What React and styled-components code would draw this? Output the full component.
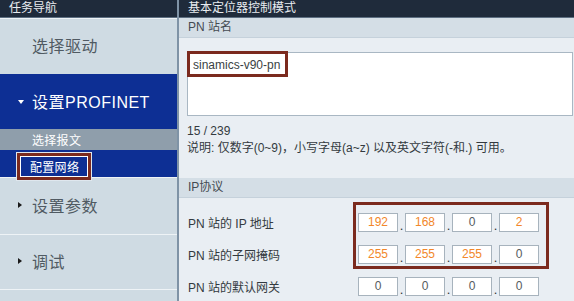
import styled, { createGlobalStyle } from "styled-components";

const GlobalStyle = createGlobalStyle`
  html, body { margin: 0; padding: 0; }
  body {
    font-family: "Liberation Sans", "Noto Sans CJK SC", sans-serif;
    background: #e9eef3;
  }
`;

const Screen = styled.div`
  width: 574px;
  height: 301px;
  overflow: hidden;
  display: grid;
  grid-template-columns: 179px 1fr;
  background: #e9eef3;
`;

const Sidebar = styled.div`
  display: flex;
  flex-direction: column;
  border-right: 2px solid #7f93a6;
  background: #cfdbe3;
`;

const Main = styled.div`
  display: flex;
  flex-direction: column;
  background: #e9eef3;
  min-width: 0;
`;

const PanelHeader = styled.div`
  height: 17px;
  flex-shrink: 0;
  border-bottom: 1px solid #5d6f82;
  background: #1f2b3b;
  color: #e8ecf0;
  font-size: 12px;
  line-height: 17px;
  padding-left: ${(p) => p.$pad || 9}px;
`;

const NavItem = styled.div`
  height: ${(p) => p.$h}px;
  flex-shrink: 0;
  box-sizing: border-box;
  display: flex;
  align-items: center;
  gap: 8px;
  padding-left: ${(p) => (p.$arrow ? 18 : 32)}px;
  padding-bottom: 3px;
  font-size: 16px;
  letter-spacing: 0.5px;
  color: ${(p) => (p.$active ? "#ffffff" : "#505a62")};
  background: ${(p) => (p.$active ? "#0d2f94" : "#cfdbe3")};
  border-top: 1px solid ${(p) => (p.$active ? "#0d2f94" : "#eef3f6")};
`;

const ArrowDown = styled.span`
  width: 0;
  height: 0;
  border-left: 3px solid transparent;
  border-right: 3px solid transparent;
  border-top: 4px solid #ffffff;
  margin-top: 2px;
`;

const ArrowRight = styled.span`
  width: 0;
  height: 0;
  border-top: 3px solid transparent;
  border-bottom: 3px solid transparent;
  border-left: 4px solid #1a1a1a;
  margin-right: 2px;
`;

const SubItem = styled.div`
  height: ${(p) => p.$h}px;
  flex-shrink: 0;
  display: flex;
  align-items: center;
  padding-left: ${(p) => p.$pad}px;
  font-size: 12px;
  letter-spacing: 0.3px;
  color: #ffffff;
  background: ${(p) => (p.$active ? "#0d2f94" : "#8f9eab")};
  position: relative;
  z-index: 1;
`;

const MarkedLabel = styled.span`
  display: inline-flex;
  align-items: center;
  height: 21px;
  padding: 0 9px 0 10px;
  margin-top: 5px;
  border: 3px solid #7b2a1e;
  box-shadow: inset 0 0 0 1px #ffffff, 0 0 0 1px #dfe7ee;
`;

const SectionHeader = styled.div`
  height: 19px;
  flex-shrink: 0;
  line-height: 19px;
  padding-left: 9px;
  margin-top: ${(p) => p.$gap || 0}px;
  font-size: 12px;
  color: #444b52;
  background: #d4dee6;
  border-bottom: 1px solid #c5d1db;
`;

const SectionBody = styled.div`
  position: relative;
  padding: ${(p) => p.$pad};
  color: #333a40;
  font-size: 12px;
`;

const NameField = styled.div`
  position: relative;
  height: 54px;
  border: 1px solid #a9b7c3;
  background: #ffffff;
  padding: 4px 5px;
  color: #3a3f44;
  font-size: 12px;
  line-height: 17px;
`;

const FieldMark = styled.div`
  position: absolute;
  left: -1px;
  top: -2px;
  width: 95px;
  height: 20px;
  border: 3px solid #7b2a1e;
`;

const Note = styled.div`
  line-height: 17px;
  margin-top: ${(p) => p.$gap || 0}px;
`;

const Row = styled.div`
  height: 32px;
  display: flex;
  align-items: center;
`;

const RowLabel = styled.div`
  width: 170px;
  flex-shrink: 0;
`;

const IpGroup = styled.div`
  display: flex;
  align-items: center;
`;

const IpBox = styled.div`
  width: 38px;
  height: 17px;
  border: 1px solid #a7b3bd;
  background: #ffffff;
  text-align: center;
  line-height: 16px;
  font-size: 12px;
  color: ${(p) => (p.$set ? "#f2872a" : "#555b60")};
`;

const Dot = styled.span`
  width: 7px;
  text-align: center;
  font-size: 13px;
  line-height: 13px;
  align-self: flex-end;
  color: #333;
`;

const IpMark = styled.div`
  position: absolute;
  left: 174px;
  top: 4px;
  width: 190px;
  height: 61px;
  border: 3px solid #7b2a1e;
  pointer-events: none;
`;

const rows = [
  { label: "PN 站的 IP 地址", values: ["192", "168", "0", "2"] },
  { label: "PN 站的子网掩码", values: ["255", "255", "255", "0"] },
  { label: "PN 站的默认网关", values: ["0", "0", "0", "0"] },
];

const IpField = ({ values }) => (
  <IpGroup>
    {values.map((v, i) => (
      <IpGroup key={i}>
        {i > 0 && <Dot>.</Dot>}
        <IpBox $set={v !== "0"}>{v}</IpBox>
      </IpGroup>
    ))}
  </IpGroup>
);

export default function App() {
  return (
    <>
      <GlobalStyle />
      <Screen>
        <Sidebar>
          <PanelHeader>任务导航</PanelHeader>
          <NavItem $h={56}>选择驱动</NavItem>
          <NavItem $h={55} $active $arrow>
            <ArrowDown />
            设置PROFINET
          </NavItem>
          <SubItem $h={21} $pad={32}>选择报文</SubItem>
          <SubItem $h={27} $pad={17} $active>
            <MarkedLabel>配置网络</MarkedLabel>
          </SubItem>
          <NavItem $h={57} $arrow>
            <ArrowRight />
            设置参数
          </NavItem>
          <NavItem $h={55} $arrow>
            <ArrowRight />
            调试
          </NavItem>
          <NavItem $h={40} />
        </Sidebar>
        <Main>
          <PanelHeader $pad={9}>基本定位器控制模式</PanelHeader>
          <SectionHeader>PN 站名</SectionHeader>
          <SectionBody $pad="14px 1px 0 8px">
            <NameField>
              sinamics-v90-pn
              <FieldMark />
            </NameField>
            <Note $gap={7}>15 / 239</Note>
            <Note>说明: 仅数字(0~9)，小写字母(a~z) 以及英文字符(-和.) 可用。</Note>
          </SectionBody>
          <SectionHeader $gap={21}>IP协议</SectionHeader>
          <SectionBody $pad="8px 0 0 9px">
            {rows.map((r) => (
              <Row key={r.label}>
                <RowLabel>{r.label}</RowLabel>
                <IpField values={r.values} />
              </Row>
            ))}
            <IpMark />
          </SectionBody>
        </Main>
      </Screen>
    </>
  );
}
